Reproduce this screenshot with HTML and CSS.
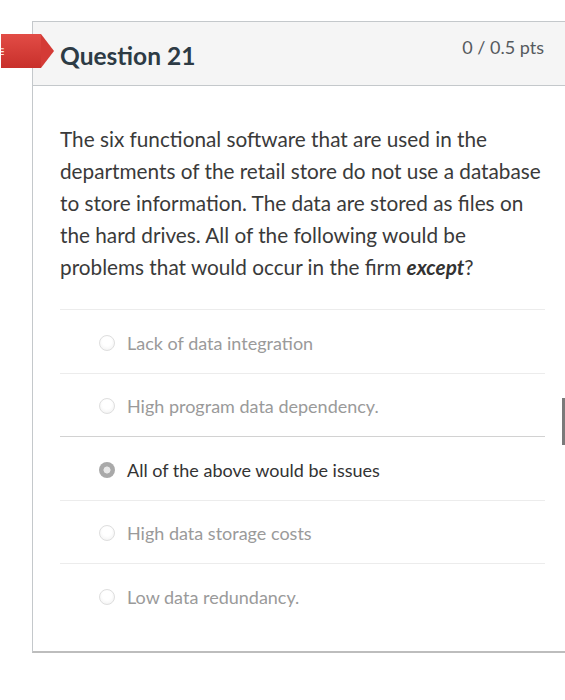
FILE: index.html
```html
<!DOCTYPE html>
<html>
<head>
<meta charset="utf-8">
<link rel="stylesheet" href="styles.css">
</head>
<body>
<div class="card">
  <div class="marker"><span class="marker-glyph">≡</span></div>
  <div class="header">
    <h2 class="title">Question 21</h2>
    <div class="pts">0 / 0.5 pts</div>
  </div>
  <div class="body">
    <p class="question">The six functional software that are used in the departments of the retail store do not use a database to store information. The data are stored as files on the hard drives. All of the following would be problems that would occur in the firm <em>except</em>?</p>
    <ul class="answers">
      <li class="answer"><span class="radio"></span><span class="label">Lack of data integration</span></li>
      <li class="answer"><span class="radio"></span><span class="label">High program data dependency.</span></li>
      <li class="answer selected"><span class="radio"></span><span class="label">All of the above would be issues</span></li>
      <li class="answer"><span class="radio"></span><span class="label">High data storage costs</span></li>
      <li class="answer"><span class="radio"></span><span class="label">Low data redundancy.</span></li>
    </ul>
  </div>
</div>
<div class="scrollthumb"></div>
</body>
</html>
```

FILE: styles.css
```css
html, body {
  margin: 0;
  padding: 0;
  background: #ffffff;
  overflow: hidden;
  font-family: Lato, "Open Sans", "Liberation Sans", sans-serif;
}

.card {
  position: relative;
  margin: 21px 0 0 32px;
  width: 560px;
  border-left: 1px solid #c4c8cb;
  border-top: 1px solid #c4c8cb;
  border-bottom: 2px solid #bdbdbd;
}

.marker {
  position: absolute;
  left: -32px;
  top: 12px;
  width: 40px;
  height: 34px;
  background: linear-gradient(#e24c46, #c8302b);
  display: flex;
  align-items: center;
  overflow: visible;
}

.marker::after {
  content: "";
  position: absolute;
  left: 40px;
  top: 0;
  border-top: 17px solid transparent;
  border-bottom: 17px solid transparent;
  border-left: 13px solid #d43b36;
}

.marker-glyph {
  color: #fbe3e2;
  font-size: 16px;
  margin-left: 0;
  width: 4px;
  overflow: hidden;
  line-height: 1;
  direction: rtl;
}

.header {
  height: 64px;
  background: #f5f5f5;
  border-bottom: 1px solid #c4c8cb;
  display: flex;
  justify-content: space-between;
  align-items: flex-start;
  padding: 0 0 0 27px;
  box-sizing: border-box;
}

.title {
  margin: 19px 0 0 0;
  font-size: 24.5px;
  font-weight: 700;
  color: #2d3b45;
  line-height: 30px;
}

.pts {
  margin: 14px 49px 0 0;
  font-size: 18px;
  color: #555a5e;
  line-height: 22px;
}

.body {
  padding: 0 16px 24px 27px;
}

.question {
  margin: 37px 0 0 0;
  width: 485px;
  font-size: 20.75px;
  line-height: 32px;
  color: #3a3a3a;
}

.question em {
  font-style: italic;
  font-weight: 700;
  color: #333;
}

.answers {
  list-style: none;
  margin: 26px 0 0 0;
  padding: 0;
  width: 485px;
}

.answer {
  display: flex;
  align-items: center;
  height: 63.5px;
  border-top: 1px solid #ececec;
  padding-left: 39px;
  padding-top: 3px;
  box-sizing: border-box;
}

.answer.selected {
  border-top-color: #d2d2d2;
}

.radio {
  width: 16px;
  height: 16px;
  border-radius: 50%;
  border: 1px solid #dedede;
  background: radial-gradient(circle at 50% 40%, #ffffff 40%, #eeeeee 100%);
  box-sizing: border-box;
  margin-right: 12px;
  flex: none;
}

.selected .radio {
  border: none;
  background: radial-gradient(circle, #e8e8e8 0 28%, #a9a9a9 34% 100%);
}

.label {
  font-size: 18px;
  color: #9a9a9a;
}

.selected .label {
  color: #333333;
}

.scrollthumb {
  position: absolute;
  right: 0;
  top: 398px;
  width: 3px;
  height: 47px;
  background: #7a7a7a;
}
```
